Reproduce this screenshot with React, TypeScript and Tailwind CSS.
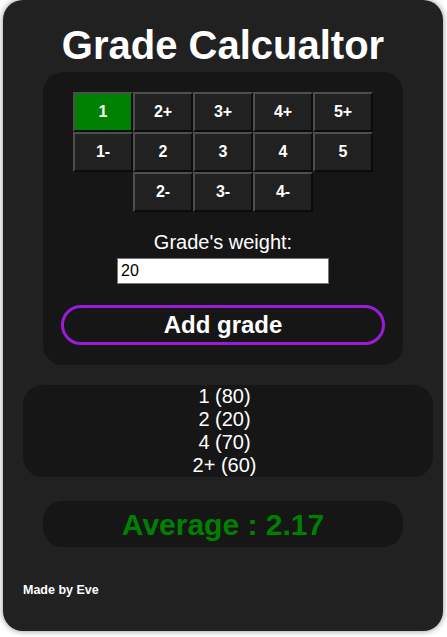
import React from "react";

const rows: (string | null)[][] = [
  ["1", "2+", "3+", "4+", "5+"],
  ["1-", "2", "3", "4", "5"],
  [null, "2-", "3-", "4-", null],
];

const grades = ["1 (80)", "2 (20)", "4 (70)", "2+ (60)"];

export default function App() {
  return (
    <div
      className="min-h-[637px] bg-white"
      style={{ fontFamily: '"Liberation Sans", Arial, sans-serif' }}
    >
      <div className="ml-[3px] flex h-[631px] w-[440px] flex-col rounded-[20px] bg-[#212121] pt-[22px] text-white shadow-[0_0_6px_rgba(0,0,0,0.45)]">
        <h1 className="mb-[4px] text-center text-[40px] font-bold leading-[46px]">
          Grade Calcualtor
        </h1>

        <div className="mx-auto flex w-[360px] flex-col items-center rounded-[20px] bg-[#161616] pb-[20px] pt-[20px]">
          <div className="grid w-[300px] grid-cols-5">
            {rows.flat().map((g, i) =>
              g === null ? (
                <div key={i} className="h-[40px] w-[60px]" />
              ) : (
                <button
                  key={i}
                  className={`flex h-[40px] w-[60px] items-center justify-center border-2 border-b-[#0b0b0b] border-l-[#4e4e4e] border-r-[#0b0b0b] border-t-[#4e4e4e] text-[16px] font-bold text-white ${
                    g === "1" ? "bg-[#008000]" : "bg-[#212121]"
                  }`}
                >
                  {g}
                </button>
              )
            )}
          </div>

          <label className="mt-[19px] text-[20px] leading-[23px]">Grade's weight:</label>
          <input
            className="mt-[4px] h-[26px] w-[212px] border border-[#767676] bg-white px-[3px] text-[16px] text-black outline-none"
            defaultValue="20"
            style={{ fontFamily: '"Liberation Sans", Arial, sans-serif' }}
          />

          <button className="mt-[21px] flex h-[40px] w-[324px] items-center justify-center rounded-full border-[3px] border-[#9c1bd8] text-[24px] font-bold leading-none text-white">
            Add grade
          </button>
        </div>

        <div className="ml-[20px] mt-[20px] w-[410px] rounded-[20px] bg-[#161616] pr-[7px] text-center text-[20px] leading-[23px]">
          {grades.map((g) => (
            <div key={g}>{g}</div>
          ))}
        </div>

        <div className="mx-auto mt-[24px] flex h-[46px] w-[360px] items-center justify-center rounded-[20px] bg-[#161616] text-[30px] font-bold text-[#008000]">
          Average : 2.17
        </div>

        <div className="ml-[20px] mt-[36px] text-[12.5px] font-bold leading-[15px]">Made by Eve</div>
      </div>
    </div>
  );
}
